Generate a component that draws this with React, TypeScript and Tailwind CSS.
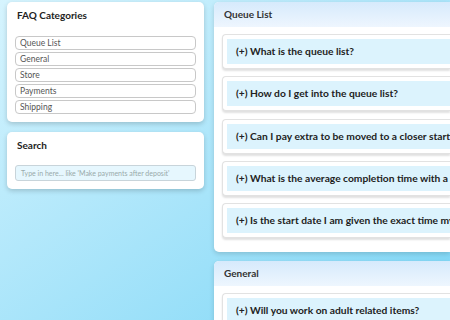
import React from 'react';

const categories = ['Queue List', 'General', 'Store', 'Payments', 'Shipping'];

const sections = [
  {
    title: 'Queue List',
    items: [
      'What is the queue list?',
      'How do I get into the queue list?',
      'Can I pay extra to be moved to a closer starting date?',
      'What is the average completion time with a commission?',
      'Is the start date I am given the exact time my commission starts?',
    ],
  },
  {
    title: 'General',
    items: ['Will you work on adult related items?', 'Do you take custom requests?'],
  },
];

const App = () => {
  return (
    <div
      className="min-h-screen w-[450px] h-[320px] overflow-hidden bg-gradient-to-br from-[#d6f4fe] to-[#7ad6f6] text-[#222]"
      style={{ fontFamily: 'Lato, "Noto Sans", sans-serif' }}
    >
      <div className="flex gap-[10px] pl-[7px] pt-[2px]">
        {/* Left column */}
        <div className="flex w-[197px] shrink-0 flex-col gap-[10px]">
          <div className="rounded-[5px] bg-white px-[8px] pt-[5px] pb-[8px] shadow-[0_2px_5px_rgba(0,0,0,0.18)]">
            <h2 className="mb-[13px] pl-[2px] text-[10px] font-bold leading-[16px] text-[#222]">FAQ Categories</h2>
            <div className="flex flex-col gap-[2px]">
              {categories.map((c) => (
                <div
                  key={c}
                  className="h-[14px] rounded-[4px] border border-[#c8c8c8] pl-[4px] text-[8.5px] leading-[12px] text-[#555]"
                >
                  {c}
                </div>
              ))}
            </div>
          </div>

          <div className="rounded-[5px] bg-white px-[8px] pt-[5px] pb-[8px] shadow-[0_2px_5px_rgba(0,0,0,0.18)]">
            <h2 className="mb-[12px] pl-[2px] text-[10px] font-bold leading-[16px] text-[#222]">Search</h2>
            <div className="h-[16px] rounded-[3px] border border-[#c8d4da] bg-[#e6f7fe] pl-[5px] text-[7px] leading-[14px] text-[#9aa]">
              Type in here... like 'Make payments after deposit'
            </div>
          </div>
        </div>

        {/* Right column */}
        <div className="flex min-w-0 flex-1 flex-col gap-[9px]">
          {sections.map((s) => (
            <div key={s.title} className="rounded-l-[5px] bg-white shadow-[0_2px_5px_rgba(0,0,0,0.15)]">
              <div className="h-[25px] rounded-tl-[5px] bg-gradient-to-b from-[#d6eafc] to-[#eef6fe] pl-[10px] text-[10px] font-bold leading-[25px] text-[#333]">
                {s.title}
              </div>
              <div className="flex flex-col gap-[7.3px] pt-[7px] pb-[14px] pl-[8px]">
                {s.items.map((q) => (
                  <div
                    key={q}
                    className="rounded-l-[4px] border border-r-0 border-[#e2e2e2] bg-white p-[4px] pr-0 shadow-[0_2px_2px_rgba(0,0,0,0.12)]"
                  >
                    <div className="h-[25px] overflow-hidden whitespace-nowrap bg-[#dcf3fd] pl-[9px] text-[10.25px] font-bold leading-[25px] text-[#222]">
                      (+) {q}
                    </div>
                  </div>
                ))}
              </div>
            </div>
          ))}
        </div>
      </div>
    </div>
  );
};

export default App;
